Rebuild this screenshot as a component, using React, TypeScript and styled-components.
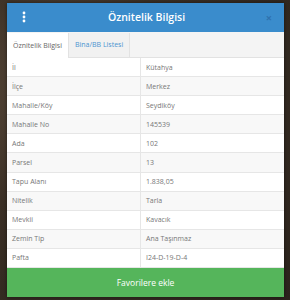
import styled, { createGlobalStyle } from "styled-components";

const GlobalStyle = createGlobalStyle`
  html, body {
    margin: 0;
    padding: 0;
  }
  body {
    width: 290px;
    height: 300px;
    overflow: hidden;
    font-family: "Open Sans", "Liberation Sans", sans-serif;
    background: radial-gradient(circle at 20% 30%, #5a4a3a 0%, #3b3026 40%, #2c241d 100%);
  }
`;

const Backdrop = styled.div`
  width: 290px;
  height: 300px;
  padding: 3px 6px 3px 7px;
  box-sizing: border-box;
`;

const Modal = styled.div`
  width: 277px;
  height: 294px;
  background: #fff;
  display: flex;
  flex-direction: column;
  box-shadow: 0 0 4px rgba(0, 0, 0, 0.5);
`;

const Header = styled.div`
  height: 29px;
  background: #3a8ccc;
  display: flex;
  align-items: center;
  padding: 0 9px 0 11px;
  color: #fff;
`;

const MenuIcon = styled.div`
  width: 12px;
  display: flex;
  justify-content: center;
`;

const Title = styled.div`
  flex: 1;
  text-align: center;
  font-size: 10.5px;
  font-weight: 600;
`;

const Close = styled.div`
  width: 12px;
  text-align: center;
  color: #2f72ae;
  font-size: 11px;
  font-weight: 700;
`;

const TabBar = styled.div`
  height: 25px;
  background: #f4f4f4;
  display: flex;
  align-items: flex-end;
  border-bottom: 1px solid #e2e2e2;
`;

const Tab = styled.div<{ $active?: boolean }>`
  height: ${(p) => (p.$active ? "25px" : "24px")};
  padding: 0 6px;
  display: flex;
  align-items: center;
  font-size: 7px;
  color: ${(p) => (p.$active ? "#666" : "#4a94d0")};
  background: ${(p) => (p.$active ? "#fff" : "#f1f1f1")};
  border-right: 1px solid #e2e2e2;
  margin-bottom: ${(p) => (p.$active ? "-1px" : "0")};
`;

const Table = styled.div`
  flex: 1;
  display: flex;
  flex-direction: column;
`;

const Row = styled.div<{ $striped: boolean }>`
  height: 19.1px;
  display: grid;
  grid-template-columns: 133px 1fr;
  background: ${(p) => (p.$striped ? "#f8f8f8" : "#fff")};
  border-bottom: 1px solid #e6e6e6;
  box-sizing: border-box;
  font-size: 7px;
  color: #777;
`;

const Cell = styled.div`
  display: flex;
  align-items: center;
  padding-left: 5px;
  & + & {
    border-left: 1px solid #e6e6e6;
  }
`;

const Button = styled.div`
  height: 29px;
  background: #55b55b;
  color: #fff;
  font-size: 8.5px;
  display: flex;
  align-items: center;
  justify-content: center;
`;

const rows: [string, string][] = [
  ["İl", "Kütahya"],
  ["İlçe", "Merkez"],
  ["Mahalle/Köy", "Seydiköy"],
  ["Mahalle No", "145539"],
  ["Ada", "102"],
  ["Parsel", "13"],
  ["Tapu Alanı", "1.838,05"],
  ["Nitelik", "Tarla"],
  ["Mevkii", "Kavacık"],
  ["Zemin Tip", "Ana Taşınmaz"],
  ["Pafta", "I24-D-19-D-4"],
];

export default function App() {
  return (
    <>
      <GlobalStyle />
      <Backdrop>
        <Modal>
          <Header>
            <MenuIcon>
              <svg width="4" height="12" viewBox="0 0 4 12">
                <circle cx="2" cy="2" r="1.4" fill="#fff" />
                <circle cx="2" cy="6" r="1.4" fill="#fff" />
                <circle cx="2" cy="10" r="1.4" fill="#fff" />
              </svg>
            </MenuIcon>
            <Title>Öznitelik Bilgisi</Title>
            <Close>×</Close>
          </Header>
          <TabBar>
            <Tab $active>Öznitelik Bilgisi</Tab>
            <Tab>Bina/BB Listesi</Tab>
          </TabBar>
          <Table>
            {rows.map(([k, v], i) => (
              <Row key={k} $striped={i % 2 === 1}>
                <Cell>{k}</Cell>
                <Cell>{v}</Cell>
              </Row>
            ))}
          </Table>
          <Button>Favorilere ekle</Button>
        </Modal>
      </Backdrop>
    </>
  );
}
